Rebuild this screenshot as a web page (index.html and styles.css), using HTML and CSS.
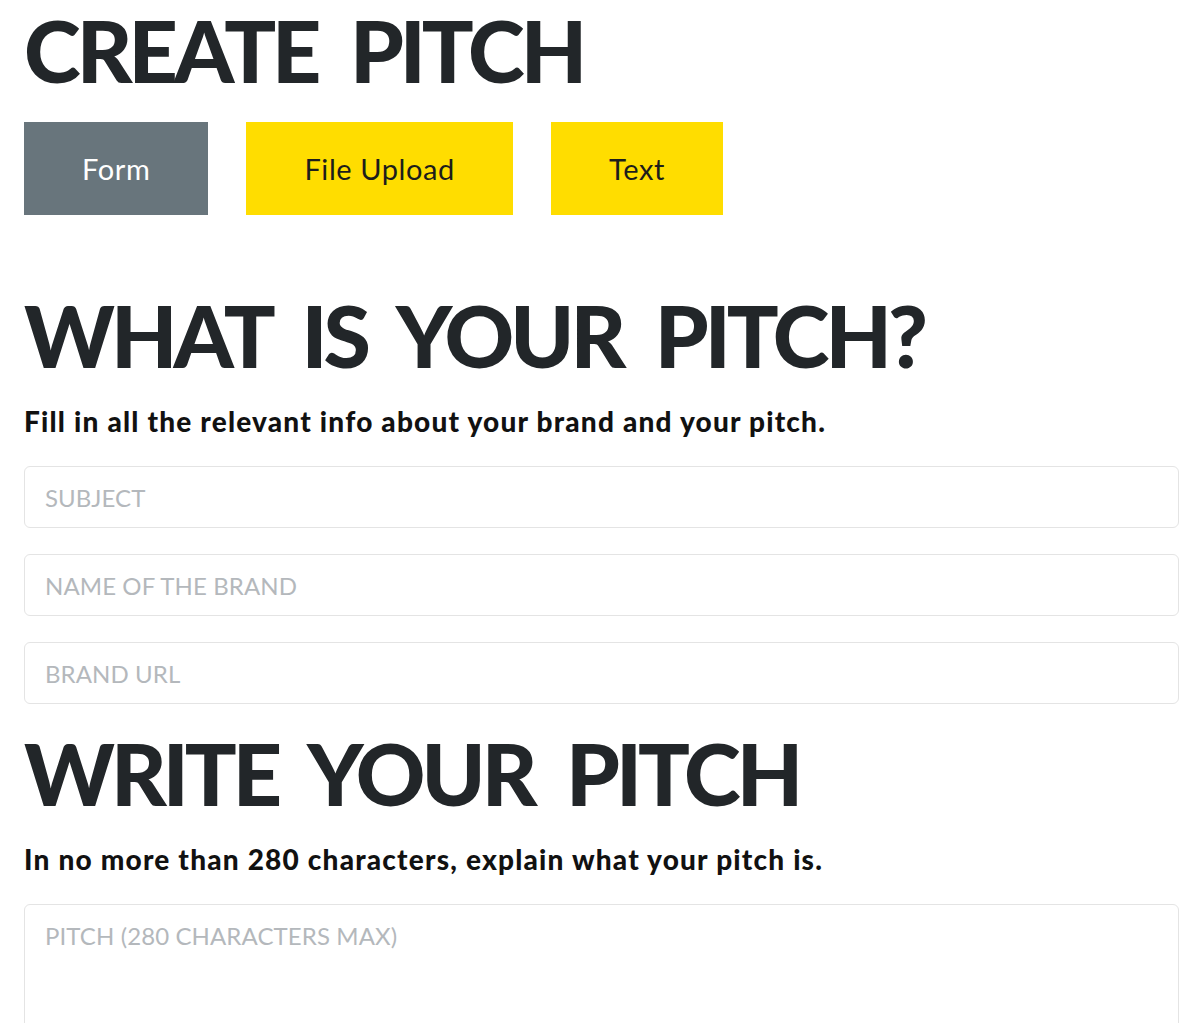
FILE: index.html
```html
<!DOCTYPE html>
<html>
<head>
<meta charset="utf-8">
<link rel="stylesheet" href="styles.css">
</head>
<body>
<main class="page">
  <h1 class="heading heading--first">CREATE PITCH</h1>
  <div class="tabs">
    <button class="tab tab--active">Form</button>
    <button class="tab">File Upload</button>
    <button class="tab">Text</button>
  </div>

  <h2 class="heading heading--section">WHAT IS YOUR PITCH?</h2>
  <p class="lead">Fill in all the relevant info about your brand and your pitch.</p>
  <form class="fields">
    <input class="field" type="text" placeholder="SUBJECT">
    <input class="field" type="text" placeholder="NAME OF THE BRAND">
    <input class="field" type="text" placeholder="BRAND URL">
  </form>

  <h2 class="heading heading--write">WRITE YOUR PITCH</h2>
  <p class="lead">In no more than 280 characters, explain what your pitch is.</p>
  <textarea class="field field--area" placeholder="PITCH (280 CHARACTERS MAX)"></textarea>
</main>
</body>
</html>
```
FILE: styles.css
```css
html, body {
  margin: 0;
  padding: 0;
  background: #ffffff;
}

.page {
  padding: 0 21px 0 24px;
  font-family: "Lato", "Liberation Sans", sans-serif;
}

.heading {
  margin: 0;
  font-family: "Lato", sans-serif;
  font-weight: 900;
  font-size: 86px;
  line-height: 86px;
  color: #222629;
  letter-spacing: -4px;
  word-spacing: 16px;
  white-space: nowrap;
}

.heading--first {
  margin-top: 7px;
}

.tabs {
  display: flex;
  gap: 38px;
  margin-top: 29px;
}

.tab {
  height: 93px;
  padding: 0 58px;
  border: 0;
  border-radius: 0;
  background: #ffdd00;
  color: #1d1d1b;
  font-family: "Lato", sans-serif;
  font-size: 29px;
  font-weight: 400;
  letter-spacing: 0.6px;
  cursor: pointer;
}

.tab--active {
  background: #68757c;
  color: #ffffff;
}

.heading--section {
  margin-top: 77px;
}

.heading--write {
  margin-top: 26px;
}

.lead {
  margin: 29px 0 31px;
  font-family: "Lato", sans-serif;
  font-weight: 900;
  font-size: 28px;
  line-height: 28px;
  letter-spacing: 1.2px;
  color: #111111;
  white-space: nowrap;
}

.fields {
  display: flex;
  flex-direction: column;
  gap: 26px;
  margin: 0;
}

.field {
  display: block;
  box-sizing: border-box;
  width: 100%;
  height: 62px;
  margin: 0;
  padding: 0 20px;
  border: 1px solid #e4e4e4;
  border-radius: 6px;
  background: #ffffff;
  font-family: "Lato", sans-serif;
  font-size: 24px;
  color: #333;
  outline: none;
}

.field::placeholder {
  color: #b4b8bc;
  letter-spacing: 0.1px;
}

.field--area {
  height: 160px;
  padding: 16px 20px;
  resize: none;
}
```
